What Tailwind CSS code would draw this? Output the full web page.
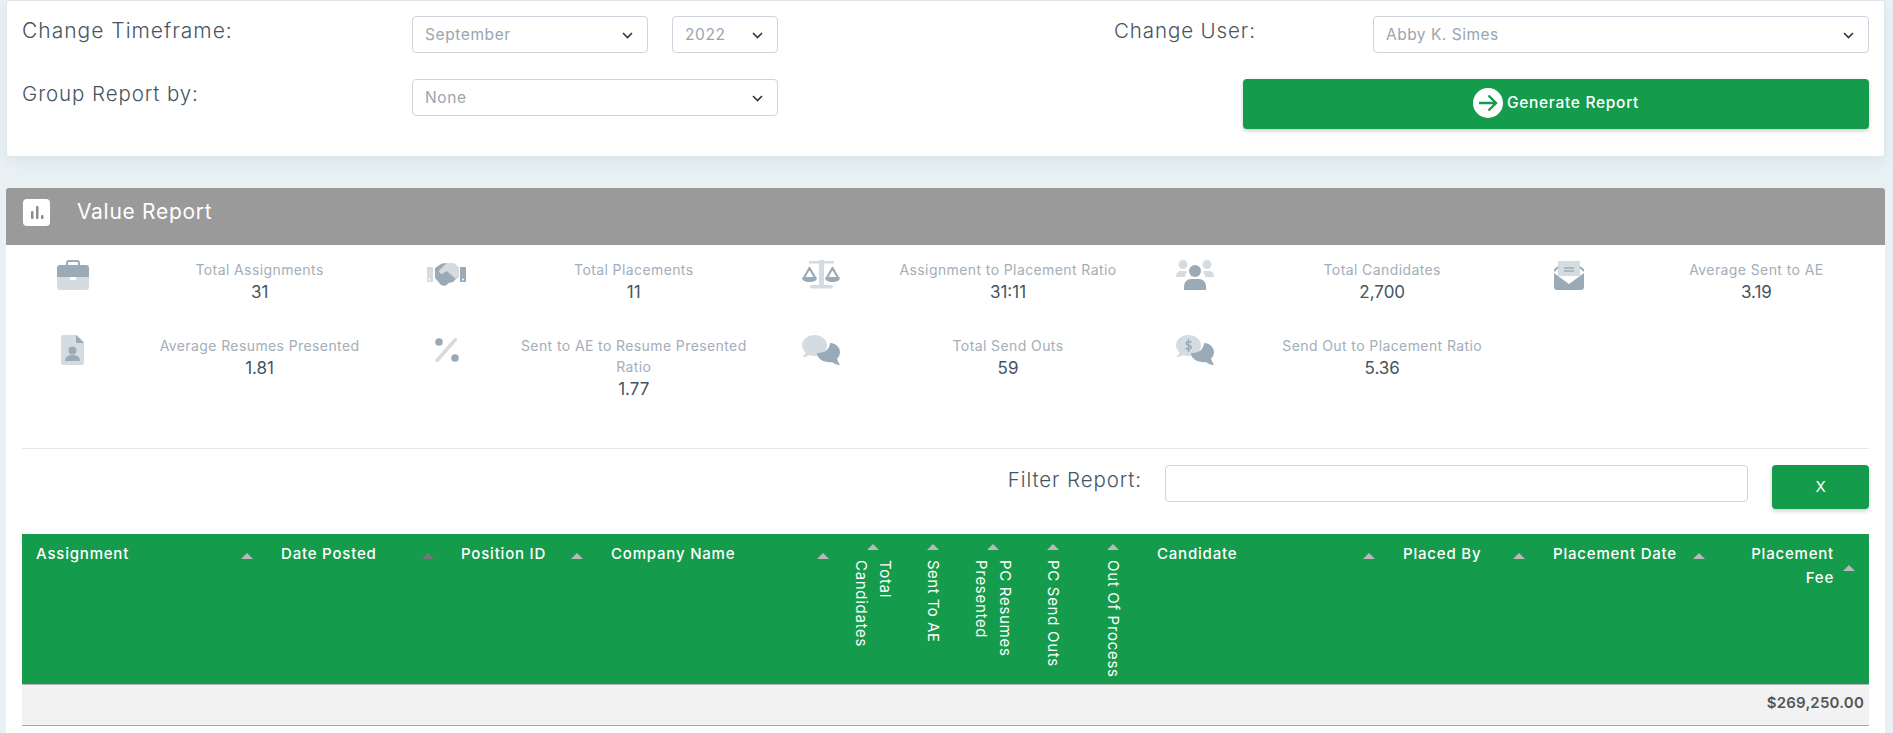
<!DOCTYPE html>
<html lang="en">
<head>
    <meta charset="UTF-8">
    <meta name="viewport" content="width=device-width, initial-scale=1.0">
    <title>Value Report</title>
    <script src="https://cdn.jsdelivr.net/npm/@tailwindcss/browser@4"></script>
</head>
<body class="bg-[#e9f1f4] [font-family:Inter,sans-serif] h-[733px] overflow-hidden pl-[6px] pr-[8px]">
    <!-- filters -->
    <section class="bg-white border border-[#dfe6ea] rounded-[3px] h-[157px] px-[15px] pt-[15px] shadow-[0_6px_16px_rgba(80,100,110,0.08)]">
        <div class="flex items-start h-[37px]">
            <label class="w-[390px] text-[21px] tracking-[1px] leading-[30px] text-[#46555f] font-light">Change Timeframe:</label>
            <div class="relative w-[236px]">
                <select class="appearance-none w-full h-[37px] pl-[12px] pt-[1px] border border-[#ced4de] rounded-[4px] bg-white text-[15.5px] tracking-[0.6px] text-[#9aa5b1]"><option>September</option></select>
                <svg class="absolute right-[15px] top-[16px] w-[11px] h-[7px] pointer-events-none" viewBox="0 0 11 7" fill="none" stroke="#333" stroke-width="1.6"><path d="M1 1l4.5 4.5L10 1"/></svg>
            </div>
            <div class="relative w-[106px] ml-[24px]">
                <select class="appearance-none w-full h-[37px] pl-[12px] pt-[1px] border border-[#ced4de] rounded-[4px] bg-white text-[15.5px] tracking-[0.6px] text-[#9aa5b1]"><option>2022</option></select>
                <svg class="absolute right-[15px] top-[16px] w-[11px] h-[7px] pointer-events-none" viewBox="0 0 11 7" fill="none" stroke="#333" stroke-width="1.6"><path d="M1 1l4.5 4.5L10 1"/></svg>
            </div>
            <label class="w-[259px] ml-[336px] text-[20.5px] tracking-[0.9px] leading-[30px] text-[#46555f] font-light">Change User:</label>
            <div class="relative flex-1">
                <select class="appearance-none w-full h-[37px] pl-[12px] pt-[1px] border border-[#ced4de] rounded-[4px] bg-white text-[15.5px] tracking-[0.5px] text-[#9aa5b1]"><option>Abby K. Simes</option></select>
                <svg class="absolute right-[15px] top-[16px] w-[11px] h-[7px] pointer-events-none" viewBox="0 0 11 7" fill="none" stroke="#333" stroke-width="1.6"><path d="M1 1l4.5 4.5L10 1"/></svg>
            </div>
        </div>
        <div class="flex items-start mt-[26px]">
            <label class="w-[390px] text-[20.5px] tracking-[0.9px] leading-[30px] text-[#46555f] font-light">Group Report by:</label>
            <div class="relative w-[366px]">
                <select class="appearance-none w-full h-[37px] pl-[12px] pt-[1px] border border-[#ced4de] rounded-[4px] bg-white text-[15.5px] tracking-[0.6px] text-[#9aa5b1]"><option>None</option></select>
                <svg class="absolute right-[15px] top-[16px] w-[11px] h-[7px] pointer-events-none" viewBox="0 0 11 7" fill="none" stroke="#333" stroke-width="1.6"><path d="M1 1l4.5 4.5L10 1"/></svg>
            </div>
            <button class="ml-auto w-[626px] h-[50px] pb-[2px] bg-[#149b4b] rounded-[4px] text-white text-[15.5px] tracking-[0.7px] font-medium flex items-center justify-center gap-[4px] shadow-[0_2px_4px_rgba(0,0,0,0.2)]">
                <span class="w-[30px] h-[30px] rounded-full bg-white flex items-center justify-center">
                    <svg class="w-[20px] h-[18px]" viewBox="0 0 20 18" fill="none" stroke="#149b4b" stroke-width="2.4"><path d="M1 9h17M10.5 1.5L18 9l-7.500 7.500"/></svg>
                </span>
                Generate Report
            </button>
        </div>
    </section>

    <!-- report -->
    <section class="mt-[31px] bg-white rounded-t-[3px] h-[545px]">
        <div class="h-[57px] bg-[#9a9a9a] rounded-t-[3px] flex items-center pl-[17px] pb-[9px]">
            <span class="w-[27px] h-[27px] bg-white rounded-[4px] flex items-center justify-center">
                <svg class="w-[14px] h-[14px]" viewBox="0 0 14 14" fill="#8b8b8b"><rect x="1" y="6" width="2.500" height="8" rx="1"/><rect x="6" y="1" width="2.500" height="13" rx="1"/><rect x="11" y="10" width="2.500" height="4" rx="1"/></svg>
            </span>
            <h2 class="ml-[27px] text-[21px] tracking-[0.7px] text-white">Value Report</h2>
        </div>

        <div class="px-[16px] pt-[14px]">
            <div class="grid grid-cols-5 gap-y-[31px] -mx-[12px]">
                <div class="flex">
                    <div class="w-[125px] flex justify-center pt-[1px]">
                        <svg class="w-[32px] h-[30px]" viewBox="0 0 32 30"><path d="M10 6V3a2 2 0 0 1 2-2h8a2 2 0 0 1 2 2v3" fill="none" stroke="#9aabb7" stroke-width="2"/><path d="M3 5h26a3 3 0 0 1 3 3v9H0V8a3 3 0 0 1 3-3z" fill="#9aabb7"/><path d="M0 17h32v10a3 3 0 0 1-3 3H3a3 3 0 0 1-3-3z" fill="#d5dce1"/><rect x="13" y="17" width="6" height="3" fill="#fff"/></svg>
                    </div>
                    <div class="flex-1 text-center">
                        <div class="text-[14px] tracking-[0.4px] leading-[21px] text-[#a3aeb9]">Total Assignments</div>
                        <div class="text-[17px] leading-[24px] text-[#46535e]">31</div>
                    </div>
                </div>
                <div class="flex">
                    <div class="w-[125px] flex justify-center pt-[4px]">
                        <svg class="w-[39px] h-[24px]" viewBox="0 0 39 24"><path d="M0 4h6v15H0z" fill="#d5dce1"/><path d="M33 4h6v15h-6z" fill="#9aabb7"/><circle cx="2.500" cy="16.500" r="1" fill="#fff"/><circle cx="36" cy="16.500" r="1" fill="#fff"/><path d="M20 0h7l5 4v11l-3 1-9-8-6 3-2-3z" fill="#d5dce1"/><path d="M8 5l6-4c2-1 4-1 6-1l-8 8 2 3 6-3 9 8-3 3-4 1-4 3-4-1-6-7-0-1H8z" fill="#9aabb7"/></svg>
                    </div>
                    <div class="flex-1 text-center">
                        <div class="text-[14px] tracking-[0.4px] leading-[21px] text-[#a3aeb9]">Total Placements</div>
                        <div class="text-[17px] leading-[24px] text-[#46535e]">11</div>
                    </div>
                </div>
                <div class="flex">
                    <div class="w-[125px] flex justify-center pt-[1px]">
                        <svg class="w-[38px] h-[30px]" viewBox="0 0 38 30"><path d="M7 1h10V0h5v1h10v2.500H22V25h-5V3.500H7z" fill="#d5dce1"/><rect x="8" y="25" width="23" height="3.500" rx="1.700" fill="#d5dce1"/><path d="M7.500 8L1.800 18h11.400zM30.500 8L24.800 18h11.400z" fill="#fff" stroke="#9aabb7" stroke-width="2.200" stroke-linejoin="round"/><path d="M0 17.500h15c0 3-3 4.500-7.500 4.500S0 20.500 0 17.500zM23 17.500h15c0 3-3 4.500-7.500 4.500S23 20.500 23 17.500z" fill="#9aabb7"/></svg>
                    </div>
                    <div class="flex-1 text-center">
                        <div class="text-[14px] tracking-[0.4px] leading-[21px] text-[#a3aeb9]">Assignment to Placement Ratio</div>
                        <div class="text-[17px] leading-[24px] text-[#46535e]">31:11</div>
                    </div>
                </div>
                <div class="flex">
                    <div class="w-[125px] flex justify-center pt-[1px]">
                        <svg class="w-[38px] h-[30px]" viewBox="0 0 38 30"><circle cx="7" cy="4.500" r="4.500" fill="#d5dce1"/><circle cx="31" cy="4.500" r="4.500" fill="#d5dce1"/><path d="M0 17c0-4 2-6 5-6h4c1 0 2 .5 2 1-1 1-2 3-2 5zM38 17c0-4-2-6-5-6h-4c-1 0-2 .5-2 1 1 1 2 3 2 5z" fill="#d5dce1"/><circle cx="19" cy="11" r="6" fill="#9aabb7"/><path d="M8 30v-3c0-5 3-8 7-8h8c4 0 7 3 7 8v3z" fill="#9aabb7"/></svg>
                    </div>
                    <div class="flex-1 text-center">
                        <div class="text-[14px] tracking-[0.4px] leading-[21px] text-[#a3aeb9]">Total Candidates</div>
                        <div class="text-[17px] leading-[24px] text-[#46535e]">2,700</div>
                    </div>
                </div>
                <div class="flex">
                    <div class="w-[125px] flex justify-center pt-[1px]">
                        <svg class="w-[30px] h-[30px]" viewBox="0 0 30 30"><path d="M5 1h20a1 1 0 0 1 1 1v14H4V2a1 1 0 0 1 1-1z" fill="#d5dce1"/><path d="M10 8h10M10 11h10" stroke="#9aabb7" stroke-width="1.500"/><path d="M4 7l-4 4M26 7l4 4" stroke="#9aabb7" stroke-width="2"/><path d="M0 13l15 11 15-11v14a3 3 0 0 1-3 3H3a3 3 0 0 1-3-3z" fill="#9aabb7"/></svg>
                    </div>
                    <div class="flex-1 text-center">
                        <div class="text-[14px] tracking-[0.4px] leading-[21px] text-[#a3aeb9]">Average Sent to AE</div>
                        <div class="text-[17px] leading-[24px] text-[#46535e]">3.19</div>
                    </div>
                </div>

                <div class="flex">
                    <div class="w-[125px] flex justify-center">
                        <svg class="w-[23px] h-[30px]" viewBox="0 0 23 30"><path d="M2 0h14l7 7v21a2 2 0 0 1-2 2H2a2 2 0 0 1-2-2V2a2 2 0 0 1 2-2z" fill="#d5dce1"/><path d="M15 0l8 8h-8z" fill="#9aabb7"/><circle cx="11.500" cy="15.500" r="4" fill="#9aabb7"/><path d="M4 26c0-4 3-6 7.500-6s7.500 2 7.500 6z" fill="#9aabb7"/></svg>
                    </div>
                    <div class="flex-1 text-center">
                        <div class="text-[14px] tracking-[0.4px] leading-[21px] text-[#a3aeb9]">Average Resumes Presented</div>
                        <div class="text-[17px] leading-[24px] text-[#46535e]">1.81</div>
                    </div>
                </div>
                <div class="flex">
                    <div class="w-[125px] flex justify-center pt-[3px]">
                        <svg class="w-[24px] h-[24px]" viewBox="0 0 24 24"><path d="M20.500 1.500L2 22.500" stroke="#d5dce1" stroke-width="3.500" stroke-linecap="round"/><circle cx="4" cy="4" r="3.800" fill="#9aabb7"/><circle cx="20" cy="20" r="3.800" fill="#9aabb7"/></svg>
                    </div>
                    <div class="flex-1 text-center">
                        <div class="px-[8px] text-[14px] tracking-[0.4px] leading-[21px] text-[#a3aeb9]">Sent to AE to Resume Presented Ratio</div>
                        <div class="text-[17px] leading-[24px] text-[#46535e]">1.77</div>
                    </div>
                </div>
                <div class="flex">
                    <div class="w-[125px] flex justify-center">
                        <svg class="w-[38px] h-[30px]" viewBox="0 0 38 30"><path d="M12.500 0C19.500 0 25 4.500 25 10.500S19.500 21 12.500 21c-2 0-4-.4-5.500-1-2 1.500-4 2-7 2 2-1.500 3-3 3.500-4.500C1.500 15.500 0 13 0 10.500 0 4.500 5.500 0 12.500 0z" fill="#d5dce1"/><path d="M28 8c5.500 0 10 4 10 9 0 2.500-1 5-3 6.500.5 2 1.500 4 3 6.500-3 0-6-1-8-3-6 1-15-2-15-9 3 .5 8-1 10-3s3-5 3-7z" fill="#9aabb7"/></svg>
                    </div>
                    <div class="flex-1 text-center">
                        <div class="text-[14px] tracking-[0.4px] leading-[21px] text-[#a3aeb9]">Total Send Outs</div>
                        <div class="text-[17px] leading-[24px] text-[#46535e]">59</div>
                    </div>
                </div>
                <div class="flex">
                    <div class="w-[125px] flex justify-center">
                        <svg class="w-[38px] h-[30px]" viewBox="0 0 38 30"><path d="M12.500 0C19.500 0 25 4.500 25 10.500S19.500 21 12.500 21c-2 0-4-.4-5.500-1-2 1.500-4 2-7 2 2-1.500 3-3 3.500-4.500C1.500 15.500 0 13 0 10.500 0 4.500 5.500 0 12.500 0z" fill="#d5dce1"/><path d="M28 8c5.500 0 10 4 10 9 0 2.500-1 5-3 6.500.5 2 1.500 4 3 6.500-3 0-6-1-8-3-6 1-15-2-15-9 3 .5 8-1 10-3s3-5 3-7z" fill="#9aabb7"/><path d="M15.500 7.500c-.6-1.200-4.800-1.600-5.300.6-.4 2.800 5.300 1.600 5 4.500-.3 2-4.600 1.700-5.600.4M12.500 4v13" fill="none" stroke="#9aabb7" stroke-width="1.500"/></svg>
                    </div>
                    <div class="flex-1 text-center">
                        <div class="text-[14px] tracking-[0.4px] leading-[21px] text-[#a3aeb9]">Send Out to Placement Ratio</div>
                        <div class="text-[17px] leading-[24px] text-[#46535e]">5.36</div>
                    </div>
                </div>
            </div>

            <hr class="mt-[47px] border-[#e6e9ec]">

            <div class="flex items-start justify-end mt-[16px]">
                <label class="text-[20.5px] tracking-[0.9px] leading-[30px] text-[#46555f] font-light">Filter Report:</label>
                <input type="text" class="ml-[23px] w-[583px] h-[37px] border border-[#ced4de] rounded-[4px] bg-white">
                <button class="ml-[24px] w-[97px] h-[44px] bg-[#149b4b] rounded-[4px] text-white text-[15px] shadow-[0_2px_4px_rgba(0,0,0,0.2)]">X</button>
            </div>

            <table class="mt-[25px] w-[1847px] table-fixed border-collapse">
                <colgroup>
                    <col class="w-[245px]"><col class="w-[180px]"><col class="w-[150px]"><col class="w-[246px]">
                    <col class="w-[60px]"><col class="w-[60px]"><col class="w-[60px]"><col class="w-[60px]"><col class="w-[60px]">
                    <col class="w-[246px]"><col class="w-[150px]"><col class="w-[180px]"><col class="w-[150px]">
                </colgroup>
                <thead class="bg-[#149b4b] text-white text-[15px] tracking-[0.8px]">
                    <tr class="h-[150px] align-top border-b border-[#b5b5b5]">
                        <th class="pl-[14px] pr-[14px] pt-[8px] font-medium text-left leading-[24px]"><div class="flex justify-between items-center">Assignment<i class="w-0 h-0 border-x-[6px] border-x-transparent border-b-[6px] border-b-[#b9b9b9] mt-[3px]"></i></div></th>
                        <th class="pl-[14px] pr-[13px] pt-[8px] font-medium text-left leading-[24px]"><div class="flex justify-between items-center">Date Posted<i class="w-0 h-0 border-x-[6px] border-x-transparent border-b-[6px] border-b-[#737a76] mt-[3px]"></i></div></th>
                        <th class="pl-[14px] pr-[14px] pt-[8px] font-medium text-left leading-[24px]"><div class="flex justify-between items-center">Position ID<i class="w-0 h-0 border-x-[6px] border-x-transparent border-b-[6px] border-b-[#b9b9b9] mt-[3px]"></i></div></th>
                        <th class="pl-[14px] pr-[14px] pt-[8px] font-medium text-left leading-[24px]"><div class="flex justify-between items-center">Company Name<i class="w-0 h-0 border-x-[6px] border-x-transparent border-b-[6px] border-b-[#b9b9b9] mt-[3px]"></i></div></th>
                        <th class="pt-[10px] font-normal"><div class="flex flex-col items-center gap-[10px]"><i class="w-0 h-0 border-x-[6px] border-x-transparent border-b-[6px] border-b-[#b9b9b9]"></i><span class="[writing-mode:vertical-rl] leading-[24px] text-left tracking-[0.7px]">Total<br>Candidates</span></div></th>
                        <th class="pt-[10px] font-normal"><div class="flex flex-col items-center gap-[10px]"><i class="w-0 h-0 border-x-[6px] border-x-transparent border-b-[6px] border-b-[#b9b9b9]"></i><span class="[writing-mode:vertical-rl] leading-[24px] text-left tracking-[0.5px]">Sent To AE</span></div></th>
                        <th class="pt-[10px] font-normal"><div class="flex flex-col items-center gap-[10px]"><i class="w-0 h-0 border-x-[6px] border-x-transparent border-b-[6px] border-b-[#b9b9b9]"></i><span class="[writing-mode:vertical-rl] leading-[24px] text-left tracking-[0.7px]">PC Resumes<br>Presented</span></div></th>
                        <th class="pt-[10px] font-normal"><div class="flex flex-col items-center gap-[10px]"><i class="w-0 h-0 border-x-[6px] border-x-transparent border-b-[6px] border-b-[#b9b9b9]"></i><span class="[writing-mode:vertical-rl] leading-[24px] text-left tracking-[0.7px]">PC Send Outs</span></div></th>
                        <th class="pt-[10px] font-normal"><div class="flex flex-col items-center gap-[10px]"><i class="w-0 h-0 border-x-[6px] border-x-transparent border-b-[6px] border-b-[#b9b9b9]"></i><span class="[writing-mode:vertical-rl] leading-[24px] text-left tracking-[0.7px]">Out Of Process</span></div></th>
                        <th class="pl-[14px] pr-[14px] pt-[8px] font-medium text-left leading-[24px]"><div class="flex justify-between items-center">Candidate<i class="w-0 h-0 border-x-[6px] border-x-transparent border-b-[6px] border-b-[#b9b9b9] mt-[3px]"></i></div></th>
                        <th class="pl-[14px] pr-[14px] pt-[8px] font-medium text-left leading-[24px]"><div class="flex justify-between items-center">Placed By<i class="w-0 h-0 border-x-[6px] border-x-transparent border-b-[6px] border-b-[#b9b9b9] mt-[3px]"></i></div></th>
                        <th class="pl-[14px] pr-[14px] pt-[8px] font-medium text-left leading-[24px]"><div class="flex justify-between items-center">Placement Date<i class="w-0 h-0 border-x-[6px] border-x-transparent border-b-[6px] border-b-[#b9b9b9] mt-[3px]"></i></div></th>
                        <th class="pl-[14px] pr-[14px] pt-[8px] font-medium text-right leading-[24px]"><div class="flex justify-end items-center gap-[9px]"><span class="flex-1">Placement<br>Fee</span><i class="w-0 h-0 border-x-[6px] border-x-transparent border-b-[6px] border-b-[#b9b9b9] mt-[3px]"></i></div></th>
                    </tr>
                </thead>
                <tbody>
                    <tr class="h-[41px] bg-[#f2f2f2] border-b border-[#a8a8a8]">
                        <td colspan="13" class="pr-[5px] pb-[3px] text-right text-[15px] tracking-[0.2px] font-semibold text-[#555]">$269,250.00</td>
                    </tr>
                </tbody>
            </table>
        </div>
    </section>
</body>
</html>
